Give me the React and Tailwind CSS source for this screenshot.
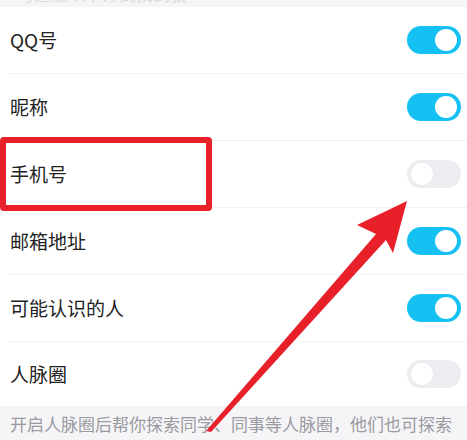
import React, { useState } from 'react';

const FONT = { fontFamily: '"Noto Sans CJK SC", "Noto Sans", sans-serif' };

function Toggle({ on, onClick }) {
    return (
        <button
            onClick={onClick}
            className={`relative w-[54px] h-[28px] rounded-full shrink-0 ${on ? 'bg-[#15c0f3]' : 'bg-[#ececf1]'}`}
        >
            <span
                className={`absolute top-[3px] w-[22px] h-[22px] rounded-full bg-white ${on ? 'right-[4px]' : 'left-[4px]'}`}
            />
        </button>
    );
}

const initial = [
    { label: 'QQ号', on: true },
    { label: '昵称', on: true },
    { label: '手机号', on: false },
    { label: '邮箱地址', on: true },
    { label: '可能认识的人', on: true },
    { label: '人脉圈', on: false },
];

export default function App() {
    const [items, setItems] = useState(initial);

    const toggle = (idx) => {
        setItems(items.map((it, i) => (i === idx ? { ...it, on: !it.on } : it)));
    };

    return (
        <div className="relative w-[467px] h-[440px] overflow-hidden bg-white" style={FONT}>
            <div className="h-[7px] bg-[#f5f5f8] overflow-hidden">
                <div className="px-[17px] text-[17px] leading-[20px] text-[#dcdce0] -mt-[16px]">可通过以下方式找到我</div>
            </div>

            {items.map((it, idx) => (
                <div key={it.label} className="pl-[10px]">
                    <div
                        className={`flex items-center justify-between pr-[6px] ${idx === items.length - 1 ? 'h-[64px]' : 'h-[67px] border-b border-[#f1f1f3]'}`}
                    >
                        <span className="text-[19px] text-[#222222]">{it.label}</span>
                        <Toggle on={it.on} onClick={() => toggle(idx)} />
                    </div>
                </div>
            ))}

            <div className="bg-[#f5f5f8] px-[10px] pt-[4px] text-[17px] leading-[28px] text-[#9a9aa0] h-[60px]">
                开启人脉圈后帮你探索同学、同事等人脉圈，他们也可探索到你
            </div>

            {/* annotation: highlight box */}
            <div className="absolute left-0 top-[137px] w-[212px] h-[74px] border-[6px] border-[#e8202a] rounded-[4px] pointer-events-none" />

            {/* annotation: arrow */}
            <svg className="absolute inset-0 pointer-events-none" width="467" height="440" viewBox="0 0 467 440">
                <polygon
                    points="206,431 376,234 357,225 407,201 393,253 386,240 211,432"
                    fill="#e8202a"
                />
            </svg>
        </div>
    );
}
